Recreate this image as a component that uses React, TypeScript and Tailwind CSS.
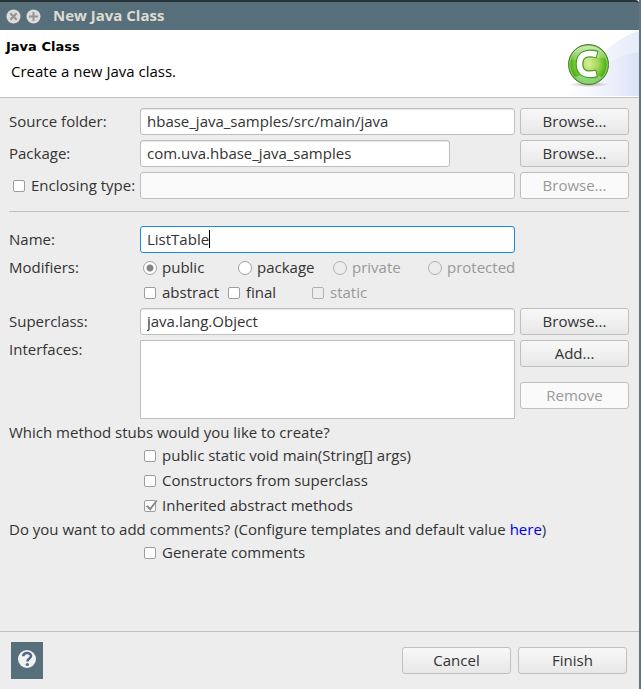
import type { ReactNode } from "react";

const rowLabel = "pb-0.5 leading-5";
const fieldBase =
  "h-[27px] w-full min-w-0 rounded-[3px] border bg-white px-1.5 pb-0.5 text-[#333] outline-none disabled:bg-[#fafafa] disabled:shadow-none";
const field = `${fieldBase} border-[#bfbfbf] shadow-[inset_0_1px_1px_#e4e4e4]`;
const box =
  "relative size-3 shrink-0 appearance-none rounded-[2px] border border-[#9c9c9c] bg-white disabled:border-[#b0b0b0] disabled:bg-[#ededed]";
const dot =
  "size-3.5 shrink-0 appearance-none rounded-full border border-[#a0a0a0] bg-white checked:bg-[radial-gradient(circle,#858585_3px,#fff_4px)] disabled:border-[#b0b0b0] disabled:bg-[#ededed]";

function PushButton({ children, disabled = false }: { children: ReactNode; disabled?: boolean }) {
  return (
    <button
      type="button"
      disabled={disabled}
      className="h-[27px] w-[109px] rounded-[3px] border border-[#bfbfbf] bg-linear-to-b from-[#f8f8f8] to-[#e8e8e8] pb-0.5 text-center leading-5 text-[#333] disabled:from-[#fafafa] disabled:to-[#fafafa] disabled:text-[#999]"
    >
      {children}
    </button>
  );
}

function Check({ label, disabled = false, checked = false }: { label: string; disabled?: boolean; checked?: boolean }) {
  return (
    <label className={`flex h-[25px] items-center gap-1.5 whitespace-nowrap pl-1 ${disabled ? "text-[#999]" : ""}`}>
      <span className="relative flex">
        <input type="checkbox" className={box} disabled={disabled} defaultChecked={checked} />
        {checked && (
          <svg className="pointer-events-none absolute left-0 top-0 h-3 w-3.5 overflow-visible" viewBox="0 0 14 12" aria-hidden="true">
            <path d="M1.8 6.2 4 5.3 6 7.8 12 .3l1.7.2L6.3 10.8z" fill="#858585" />
          </svg>
        )}
      </span>
      <span className="pb-0.5">{label}</span>
    </label>
  );
}

function Radio({ label, disabled = false, checked = false }: { label: string; disabled?: boolean; checked?: boolean }) {
  return (
    <label className={`flex h-[25px] items-center gap-[5px] whitespace-nowrap pl-[3px] ${disabled ? "text-[#999]" : ""}`}>
      <input type="radio" name="access" className={dot} disabled={disabled} defaultChecked={checked} />
      <span className="pb-0.5">{label}</span>
    </label>
  );
}

function TitleBar() {
  return (
    <header className="flex h-[30px] items-center gap-1 rounded-tr-[4px] border-t-2 border-[#293438] bg-[#566f7a] pl-1.5">
      <button type="button" aria-label="Close" className="flex">
        <svg width="15" height="15" viewBox="0 0 15 15">
          <circle cx="7.5" cy="7.5" r="7" fill="#dedcdb" />
          <path d="m4.3 4.300 6.400 6.400m0-6.400-6.400 6.400" stroke="#939496" strokeWidth="2.200" />
        </svg>
      </button>
      <button type="button" aria-label="Maximize" className="mr-2 flex pl-px">
        <svg width="15" height="15" viewBox="0 0 15 15">
          <circle cx="7.500" cy="7.500" r="7" fill="#dedcdb" />
          <path d="M7.500 3v9m-4.500-4.500h9" stroke="#939496" strokeWidth="2" />
        </svg>
      </button>
      <h1 className="pb-0.5 font-bold text-[#dfdbd2]">New Java Class</h1>
    </header>
  );
}

function Banner() {
  return (
    <section className="flex h-[68px] justify-between border-b border-[#bfbfbf] bg-white text-black">
      <div className="pl-1.5 pt-2">
        <h2 className="font-['DejaVu_Sans',sans-serif] text-[13px] font-bold leading-[18px]">Java Class</h2>
        <p className="pl-[5px] pt-[5px] leading-5">Create a new Java class.</p>
      </div>
      <svg width="75" height="67" viewBox="0 0 75 67" aria-hidden="true">
        <defs>
          <linearGradient id="sweep" x1="0" x2="1">
            <stop offset="0" stopColor="#fff" />
            <stop offset="1" stopColor="#e6ecf9" />
          </linearGradient>
          <linearGradient id="sweep2" x1="0" x2="1">
            <stop offset="0" stopColor="#fff" stopOpacity="0" />
            <stop offset="1" stopColor="#dbe3f6" />
          </linearGradient>
          <radialGradient id="ball" cx=".5" cy=".48" r=".55">
            <stop offset="0" stopColor="#d9ef94" />
            <stop offset=".45" stopColor="#a3d65a" />
            <stop offset=".72" stopColor="#5fbf25" />
            <stop offset=".9" stopColor="#43a317" />
            <stop offset="1" stopColor="#8bd06a" />
          </radialGradient>
          <linearGradient id="gloss" x1="0" x2="0" y1="0" y2="1">
            <stop offset="0" stopColor="#fff" stopOpacity=".7" />
            <stop offset="1" stopColor="#fff" stopOpacity=".1" />
          </linearGradient>
          <radialGradient id="shade">
            <stop offset="0" stopColor="#777" stopOpacity=".6" />
            <stop offset="1" stopColor="#777" stopOpacity="0" />
          </radialGradient>
        </defs>
        <path d="M0 66C22 58 34 12 75 1v65z" fill="url(#sweep)" />
        <path d="M0 66C20 50 40 27 75 22v44z" fill="url(#sweep2)" />
        <ellipse cx="25" cy="54.5" rx="20" ry="2.5" fill="url(#shade)" />
        <circle cx="24.5" cy="34.5" r="20" fill="url(#ball)" stroke="#58782f" />
        <circle cx="24.5" cy="34.5" r="18.8" fill="none" stroke="#b9e58c" strokeOpacity=".7" />
        <path d="M7 29C9 19 16 16 24.500 16S40 20 42 29C31 24 19 36 7 29z" fill="url(#gloss)" />
        <path d="M11 47c8-3 19-3 27 0-7 8-20 8-27 0z" fill="#b9f3cf" opacity=".5" />
        <path d="M33.500 24.500C22 21.500 15.500 25 15.500 34S22 46 33 43.500" fill="none" stroke="#4a9c22" strokeWidth="8" />
        <path d="M32.500 24.500C22 21.500 15.500 25 15.500 34S22 46 32 43.500" fill="none" stroke="#fff" strokeWidth="5.500" />
      </svg>
    </section>
  );
}

export default function App() {
  return (
    <div className="flex min-h-screen flex-col border-r-2 border-[#66747a] bg-[#ededed] font-['Open_Sans','Noto_Sans',sans-serif] text-[15px] leading-5 text-[#333]">
      <TitleBar />
      <Banner />
      <form className="flex flex-1 flex-col" onSubmit={(e) => e.preventDefault()}>
        <div className="flex-1 pl-[9px] pr-2.5 pt-2.5">
          <div className="grid grid-cols-[126px_1fr_109px] items-center gap-[5px]">
            <label htmlFor="source" className={rowLabel}>Source folder:</label>
            <input id="source" className={field} defaultValue="hbase_java_samples/src/main/java" />
            <PushButton>Browse...</PushButton>

            <label htmlFor="package" className={rowLabel}>Package:</label>
            <div className="pr-[65px]">
              <input id="package" className={field} defaultValue="com.uva.hbase_java_samples" />
            </div>
            <PushButton>Browse...</PushButton>

            <Check label="Enclosing type:" />
            <input aria-label="Enclosing type" className={field} disabled />
            <PushButton disabled>Browse...</PushButton>
          </div>

          <hr className="my-3 border-[#bfbfbf]" />

          <div className="grid grid-cols-[126px_1fr_109px] items-center gap-x-[5px] pt-0.5">
            <label htmlFor="name" className={rowLabel}>Name:</label>
            <div className="relative">
              <input id="name" className={`${fieldBase} border-[#1a8ae6]`} defaultValue="ListTable" />
              <span aria-hidden="true" className="pointer-events-none absolute left-[7px] top-1 h-[18px] border-r border-black text-transparent">
                ListTable
              </span>
            </div>
          </div>

          <div role="group" aria-label="Modifiers" className="grid grid-cols-[126px_1fr_109px] gap-x-[5px] pt-0.5">
            <span className="leading-[25px]">Modifiers:</span>
            <div>
              <div className="grid grid-cols-[repeat(3,95px)_1fr]">
                <Radio label="public" checked />
                <Radio label="package" />
                <Radio label="private" disabled />
                <Radio label="protected" disabled />
              </div>
              <div className="grid grid-cols-[repeat(3,84px)]">
                <Check label="abstract" />
                <Check label="final" />
                <Check label="static" disabled />
              </div>
            </div>
          </div>

          <div className="grid grid-cols-[126px_1fr_109px] items-center gap-[5px] pt-[3px]">
            <label htmlFor="super" className={rowLabel}>Superclass:</label>
            <input id="super" className={field} defaultValue="java.lang.Object" />
            <PushButton>Browse...</PushButton>

            <label htmlFor="interfaces" className="self-start leading-[18px]">Interfaces:</label>
            <textarea id="interfaces" readOnly className="block h-[79px] w-full resize-none border border-[#bfbfbf] bg-white outline-none" />
            <div className="flex flex-col gap-[15px] self-start">
              <PushButton>Add...</PushButton>
              <PushButton disabled>Remove</PushButton>
            </div>
          </div>

          <div role="group" aria-labelledby="stubs" className="pt-1">
            <p id="stubs" className="pb-0.5 leading-[18px]">Which method stubs would you like to create?</p>
            <div className="pl-[131px]">
              <Check label="public static void main(String[] args)" />
              <Check label="Constructors from superclass" />
              <Check label="Inherited abstract methods" checked />
            </div>
          </div>
          <p className="pb-0.5 pt-0.5 leading-[18px]">
            Do you want to add comments? (Configure templates and default value{" "}
            <a href="#templates" className="text-[#0000e6]">here</a>)
          </p>
          <div className="pl-[131px]">
            <Check label="Generate comments" />
          </div>
        </div>

        <footer className="flex items-start gap-[7px] border-t border-[#bfbfbf] pb-2.5 pl-[11px] pr-3 pt-2.5">
          <button type="button" aria-label="Help" className="mr-auto flex h-[37px] w-8 justify-center bg-[#566f7a] pt-2">
            <svg width="18" height="18" viewBox="0 0 18 18">
              <circle cx="9" cy="9" r="9" fill="#f1f1f2" />
              <path d="M5.200 6.200C5.400 2 13 2 13 6c0 2.600-3.600 2.600-3.600 5.500" fill="none" stroke="#52678a" strokeWidth="2.600" />
              <circle cx="9.300" cy="14.500" r="1.600" fill="#52678a" />
            </svg>
          </button>
          <div className="flex gap-[7px] pt-[5px]">
            <PushButton>Cancel</PushButton>
            <PushButton>Finish</PushButton>
          </div>
        </footer>
      </form>
    </div>
  );
}
